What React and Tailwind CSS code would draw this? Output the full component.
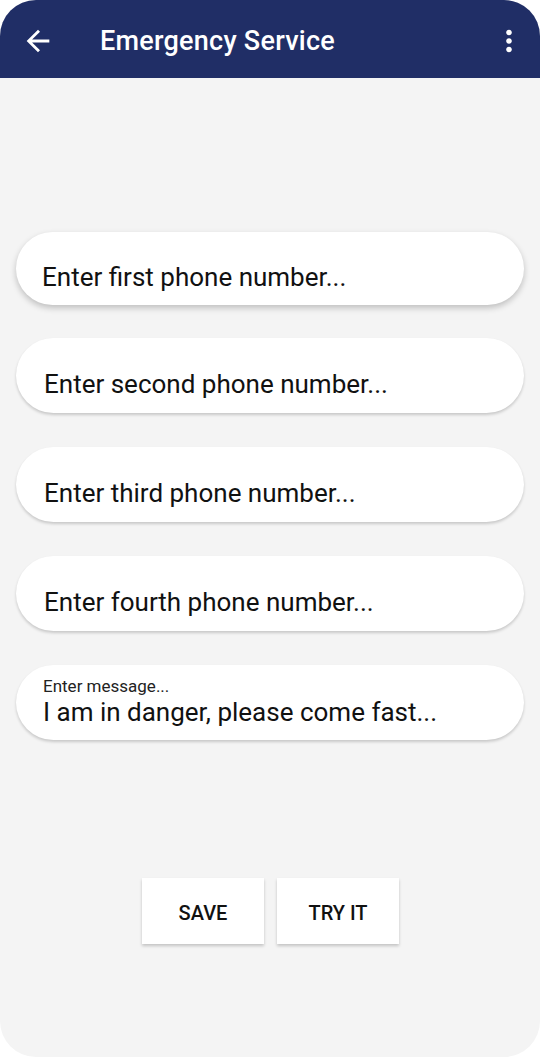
const fields = [
  { hint: "Enter first phone number...", focused: true },
  { hint: "Enter second phone number..." },
  { hint: "Enter third phone number..." },
  { hint: "Enter fourth phone number..." },
];

function ArrowBack() {
  return (
    <svg width="34" height="34" viewBox="0 0 24 24" fill="white">
      <path d="M20 11H7.83l5.59-5.59L12 4l-8 8 8 8 1.41-1.41L7.83 13H20v-2z" />
    </svg>
  );
}

function MoreVert() {
  return (
    <svg width="34" height="34" viewBox="0 0 24 24" fill="white">
      <path d="M12 8c1.1 0 2-.9 2-2s-.9-2-2-2-2 .9-2 2 .9 2 2 2zm0 2c-1.1 0-2 .9-2 2s.9 2 2 2 2-.9 2-2-.9-2-2-2zm0 6c-1.1 0-2 .9-2 2s.9 2 2 2 2-.9 2-2-.9-2-2-2z" />
    </svg>
  );
}

export default function App() {
  return (
    <div className="w-[540px] h-[1057px] bg-white" style={{ fontFamily: "Roboto, 'Liberation Sans', sans-serif" }}>
      <div className="w-full h-full rounded-[36px] overflow-hidden bg-[#f4f4f4] flex flex-col">
        {/* toolbar */}
        <header className="h-[78px] bg-[#202e66] flex items-center pt-[4px] pl-[21px] pr-[14px] shrink-0">
          <ArrowBack />
          <h1 className="ml-[45px] text-white text-[27px] leading-[32px] font-medium tracking-[0.25px] flex-1">Emergency Service</h1>
          <MoreVert />
        </header>

        <main className="flex-1 flex flex-col px-4 pt-[154px]">
          <div className="flex flex-col gap-[34px]">
            {fields.map((f) => (
              <div
                key={f.hint}
                className={
                  "rounded-full bg-white flex items-center pt-[17px] text-[26px] text-[#111] " +
                  (f.focused
                    ? "h-[73px] -mb-px pl-[26px] shadow-[0_3px_6px_rgba(0,0,0,0.22)]"
                    : "h-[75px] pl-[28px] shadow-[0_2px_3px_rgba(0,0,0,0.18)]")
                }
              >
                {f.hint}
              </div>
            ))}
            <div className="h-[75px] rounded-full bg-white flex flex-col justify-center pl-[27px] shadow-[0_2px_3px_rgba(0,0,0,0.18)]">
              <span className="text-[17px] leading-[19px] text-[#222]">Enter message...</span>
              <span className="text-[26px] leading-[32px] text-[#111]">I am in danger, please come fast...</span>
            </div>
          </div>

          <div className="mt-[138px] flex justify-center gap-[13px] pl-[1px]">
            <button className="w-[122px] h-[66px] pt-[3px] bg-white text-[20px] font-medium text-[#111] shadow-[0_2px_3px_rgba(0,0,0,0.2)]">
              SAVE
            </button>
            <button className="w-[122px] h-[66px] pt-[3px] bg-white text-[20px] font-medium text-[#111] shadow-[0_2px_3px_rgba(0,0,0,0.2)]">
              TRY IT
            </button>
          </div>
        </main>
      </div>
    </div>
  );
}
